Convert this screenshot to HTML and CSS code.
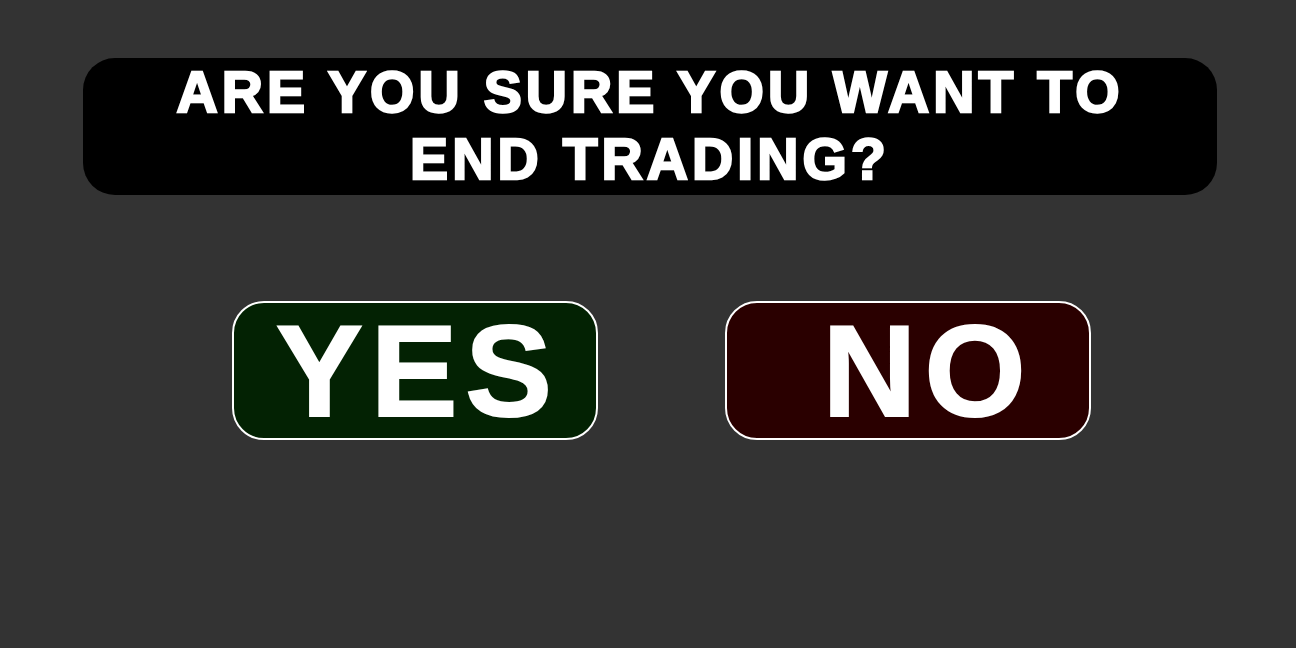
FILE: index.html
```html
<!DOCTYPE html>
<html lang="en">
<head>
<meta charset="utf-8">
<title>End trading</title>
<link rel="stylesheet" href="styles.css">
</head>
<body>
<main class="screen">
  <h1 class="prompt">ARE YOU SURE YOU WANT TO<br>END TRADING?</h1>
  <div class="choices">
    <button class="choice choice-yes">YES</button>
    <button class="choice choice-no">NO</button>
  </div>
</main>
</body>
</html>
```

FILE: styles.css
```css
html, body {
  margin: 0;
  padding: 0;
  background: #333333;
  width: 1296px;
  height: 648px;
  overflow: hidden;
}

.screen {
  display: flex;
  flex-direction: column;
  padding: 58px 0 0 83px;
  font-family: "Liberation Sans", Arial, sans-serif;
}

.prompt {
  width: 1134px;
  height: 137px;
  box-sizing: border-box;
  margin: 0;
  padding-top: 1px;
  background: #000000;
  border-radius: 32px;
  color: #ffffff;
  font-size: 57px;
  font-weight: 700;
  line-height: 67px;
  letter-spacing: 4.1px;
  text-align: center;
  -webkit-text-stroke: 2.4px #ffffff;
}

.choices {
  display: flex;
  gap: 127px;
  margin-top: 106px;
  padding-left: 149px;
}

.choice {
  width: 366px;
  height: 139px;
  box-sizing: border-box;
  border: 2px solid #ffffff;
  border-radius: 32px;
  color: #ffffff;
  font-family: "Liberation Sans", Arial, sans-serif;
  font-size: 130px;
  font-weight: 700;
  line-height: 1;
  letter-spacing: 8px;
  padding: 0 0 0 6px;
  display: flex;
  align-items: center;
  justify-content: center;
  -webkit-text-stroke: 2px #ffffff;
}

.choice-yes {
  background: #032203;
}

.choice-no {
  background: #2a0000;
  padding-left: 40px;
}
```
